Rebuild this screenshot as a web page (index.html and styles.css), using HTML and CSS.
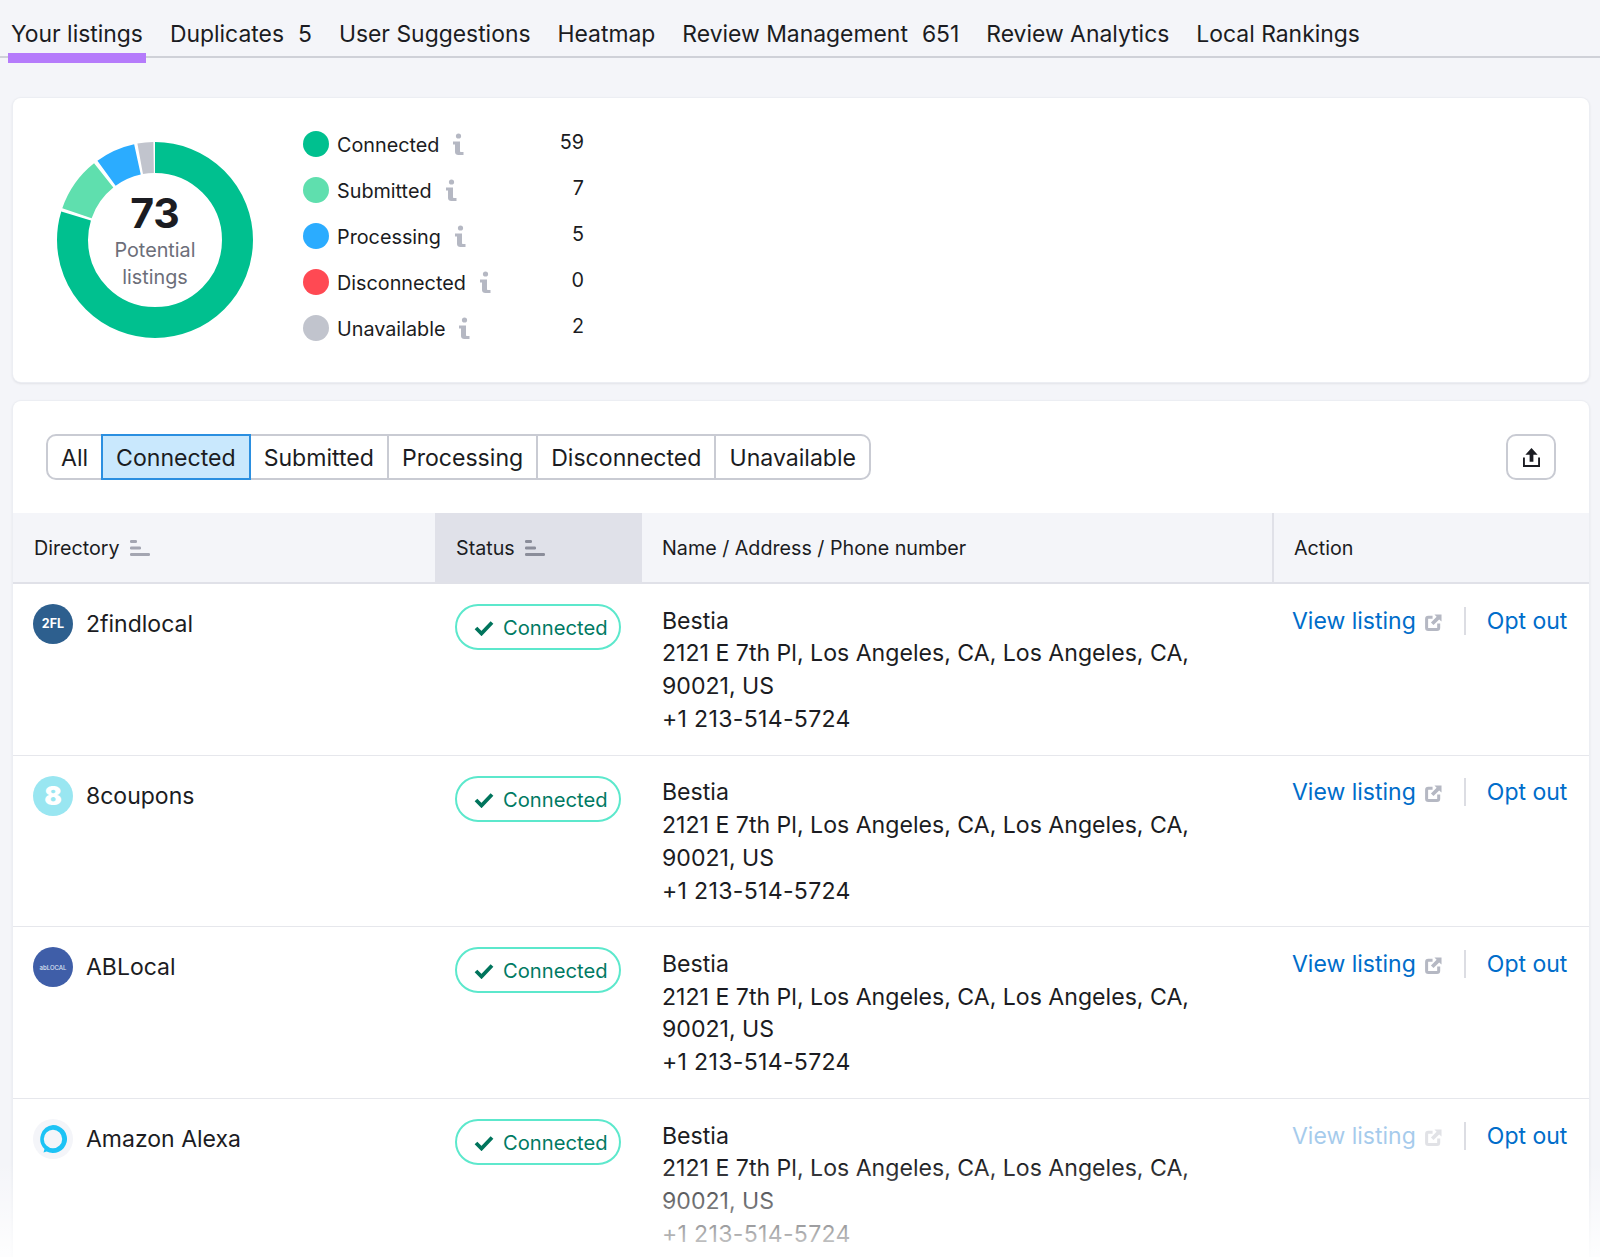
FILE: index.html
```html
<!DOCTYPE html>
<html lang="en">
<head>
<meta charset="utf-8">
<title>Your listings</title>
<link rel="stylesheet" href="styles.css">
</head>
<body>
<svg class="defs" width="0" height="0" aria-hidden="true">
  <symbol id="i-info" viewBox="0 0 12 22">
    <circle cx="6.500" cy="3" r="2.600" fill="currentColor"/>
    <path d="M1 8.500h7v9.500c0 .7.400 1 1 1h2.500V22H6.400C4.400 22 3 21 3 19V11.500H1z" fill="currentColor"/>
  </symbol>
  <symbol id="i-sort" viewBox="0 0 20 16">
    <rect x="0" y="0" width="7" height="3" rx="1.200" fill="currentColor"/>
    <rect x="0" y="6.500" width="11" height="3" rx="1.200" fill="currentColor"/>
    <rect x="0" y="13" width="20" height="3" rx="1.200" fill="currentColor"/>
  </symbol>
  <symbol id="i-check" viewBox="0 0 20 16">
    <path d="M2 8l5.500 5.500L18 2.500" fill="none" stroke="currentColor" stroke-width="3.800"/>
  </symbol>
  <symbol id="i-ext" viewBox="0 0 18 18">
    <path d="M8 3.500H3.500A1.800 1.800 0 0 0 1.700 5.300V14.500A1.800 1.800 0 0 0 3.500 16.300H12.700A1.800 1.800 0 0 0 14.500 14.500V10" fill="none" stroke="currentColor" stroke-width="3.200"/>
    <path d="M10 .5H17.500V8L15 5.700 9 11.700 6.300 9 12.300 3z" fill="currentColor"/>
  </symbol>
</svg>

<nav class="tabs">
  <a class="tab tab-active">Your listings</a>
  <a class="tab">Duplicates<span class="tab-count">5</span></a>
  <a class="tab">User Suggestions</a>
  <a class="tab">Heatmap</a>
  <a class="tab">Review Management<span class="tab-count">651</span></a>
  <a class="tab">Review Analytics</a>
  <a class="tab">Local Rankings</a>
</nav>

<main class="content">
  <section class="card summary">
    <div class="donut">
      <svg class="donut-chart" viewBox="0 0 196 196" aria-hidden="true">
        <g class="donut-ring" fill="none" stroke-width="31">
          <circle cx="98" cy="98" r="82.500" pathLength="730" stroke="#00c08f" stroke-dasharray="582 148" stroke-dashoffset="0"/>
          <circle cx="98" cy="98" r="82.500" pathLength="730" stroke="#5fdfae" stroke-dasharray="66 664" stroke-dashoffset="-586"/>
          <circle cx="98" cy="98" r="82.500" pathLength="730" stroke="#2bacff" stroke-dasharray="48 682" stroke-dashoffset="-657"/>
          <circle cx="98" cy="98" r="82.500" pathLength="730" stroke="#c1c4cd" stroke-dasharray="19 711" stroke-dashoffset="-709"/>
        </g>
      </svg>
      <div class="donut-label">
        <strong class="donut-total">73</strong>
        <span class="donut-caption">Potential<br>listings</span>
      </div>
    </div>
    <ul class="legend">
      <li class="legend-row"><span class="dot dot-connected"></span><span class="legend-name">Connected</span><svg class="info"><use href="#i-info"/></svg><span class="legend-count">59</span></li>
      <li class="legend-row"><span class="dot dot-submitted"></span><span class="legend-name">Submitted</span><svg class="info"><use href="#i-info"/></svg><span class="legend-count">7</span></li>
      <li class="legend-row"><span class="dot dot-processing"></span><span class="legend-name">Processing</span><svg class="info"><use href="#i-info"/></svg><span class="legend-count">5</span></li>
      <li class="legend-row"><span class="dot dot-disconnected"></span><span class="legend-name">Disconnected</span><svg class="info"><use href="#i-info"/></svg><span class="legend-count">0</span></li>
      <li class="legend-row"><span class="dot dot-unavailable"></span><span class="legend-name">Unavailable</span><svg class="info"><use href="#i-info"/></svg><span class="legend-count">2</span></li>
    </ul>
  </section>

  <section class="card listings">
    <div class="toolbar">
      <div class="filters">
        <button class="filter">All</button>
        <button class="filter filter-active">Connected</button>
        <button class="filter">Submitted</button>
        <button class="filter">Processing</button>
        <button class="filter">Disconnected</button>
        <button class="filter">Unavailable</button>
      </div>
      <button class="export" aria-label="Export">
        <svg class="export-icon" viewBox="0 0 18 20" aria-hidden="true">
          <path d="M9 0l6.500 7H11V14.500H7V7H2.500z" fill="currentColor"/>
          <path d="M1 10V19H17V10" fill="none" stroke="currentColor" stroke-width="2"/>
        </svg>
      </button>
    </div>

    <div class="row row-head">
      <div class="th th-first">Directory<svg class="sort"><use href="#i-sort"/></svg></div>
      <div class="th th-first th-sorted">Status<svg class="sort"><use href="#i-sort"/></svg></div>
      <div class="th">Name / Address / Phone number</div>
      <div class="th th-action">Action</div>
    </div>

    <div class="row">
      <div class="cell directory"><span class="logo logo-2fl">2FL</span>2findlocal</div>
      <div class="cell cell-status"><span class="badge"><svg class="badge-check"><use href="#i-check"/></svg>Connected</span></div>
      <div class="cell nap">Bestia<br>2121 E 7th Pl, Los Angeles, CA, Los Angeles, CA,<br>90021, US<br><span class="phone">+1 213-514-5724</span></div>
      <div class="cell actions"><a class="link">View listing</a><svg class="ext"><use href="#i-ext"/></svg><span class="sep"></span><a class="link">Opt out</a></div>
    </div>

    <div class="row">
      <div class="cell directory"><span class="logo logo-8c">8</span>8coupons</div>
      <div class="cell cell-status"><span class="badge"><svg class="badge-check"><use href="#i-check"/></svg>Connected</span></div>
      <div class="cell nap">Bestia<br>2121 E 7th Pl, Los Angeles, CA, Los Angeles, CA,<br>90021, US<br><span class="phone">+1 213-514-5724</span></div>
      <div class="cell actions"><a class="link">View listing</a><svg class="ext"><use href="#i-ext"/></svg><span class="sep"></span><a class="link">Opt out</a></div>
    </div>

    <div class="row">
      <div class="cell directory"><span class="logo logo-ab">abLOCAL</span>ABLocal</div>
      <div class="cell cell-status"><span class="badge"><svg class="badge-check"><use href="#i-check"/></svg>Connected</span></div>
      <div class="cell nap">Bestia<br>2121 E 7th Pl, Los Angeles, CA, Los Angeles, CA,<br>90021, US<br><span class="phone">+1 213-514-5724</span></div>
      <div class="cell actions"><a class="link">View listing</a><svg class="ext"><use href="#i-ext"/></svg><span class="sep"></span><a class="link">Opt out</a></div>
    </div>

    <div class="row">
      <div class="cell directory">
        <span class="logo logo-alexa">
          <svg class="alexa-icon" viewBox="0 0 28 28" aria-hidden="true">
            <path d="M14 0a14 14 0 1 1-6.400 26.450L4.500 27.500l1-3.600A14 14 0 0 1 14 0zm0 4.800a9.200 9.200 0 1 0 0 18.400 9.200 9.200 0 0 0 0-18.400z" fill="#1dc3f5" fill-rule="evenodd"/>
          </svg>
        </span>Amazon Alexa</div>
      <div class="cell cell-status"><span class="badge"><svg class="badge-check"><use href="#i-check"/></svg>Connected</span></div>
      <div class="cell nap">Bestia<br>2121 E 7th Pl, Los Angeles, CA, Los Angeles, CA,<br>90021, US<br><span class="phone">+1 213-514-5724</span></div>
      <div class="cell actions"><a class="link link-disabled">View listing</a><svg class="ext ext-disabled"><use href="#i-ext"/></svg><span class="sep"></span><a class="link">Opt out</a></div>
    </div>
  </section>
</main>
<div class="fade"></div>
</body>
</html>
```

FILE: styles.css
```css
* { box-sizing: border-box; }
html, body { margin: 0; height: 100%; }
body {
  position: relative;
  height: 1257px;
  overflow: hidden;
  background: #f4f5f9;
  color: #1b1c22;
  font-family: Inter, "Liberation Sans", sans-serif;
  font-size: 23px;
}
.defs { position: absolute; }

/* Tabs */
.tabs {
  display: flex;
  gap: 21px;
  height: 58px;
  padding-left: 8px;
  border-bottom: 2px solid #cfd1d8;
  font-size: 22.9px;
}
.tab {
  height: 63px;
  padding: 18px 3px 0;
  line-height: 32px;
  white-space: nowrap;
}
.tab-active { border-bottom: 10px solid #b57bfb; }
.tab-count { margin-left: 14px; }

/* Cards */
.content {
  display: flex;
  flex-direction: column;
  gap: 19px;
  padding: 40px 11px 0 13px;
}
.card {
  background: #fff;
  border-radius: 8px;
  box-shadow: 0 0 0 1px #eceef3, 0 1px 3px rgba(31, 32, 40, .16);
}

/* Summary */
.summary {
  display: flex;
  align-items: flex-start;
  gap: 50px;
  height: 284px;
  padding: 23px 0 0 44px;
}
.donut {
  position: relative;
  width: 196px;
  height: 196px;
  margin-top: 21px;
  flex: none;
}
.donut-chart { display: block; width: 196px; height: 196px; }
.donut-ring { transform: rotate(-90deg); transform-origin: 98px 98px; }
.donut-label {
  position: absolute;
  inset: 0;
  display: flex;
  flex-direction: column;
  align-items: center;
  padding-top: 47px;
  text-align: center;
}
.donut-total { font-size: 41px; line-height: 48px; font-weight: 700; }
.donut-caption { font-size: 19.8px; line-height: 26.5px; color: #6c6e79; }

.legend {
  width: 281px;
  margin: 0;
  padding: 0;
  list-style: none;
  font-size: 19.8px;
}
.legend-row { display: flex; align-items: center; height: 46px; }
.dot { width: 26px; height: 26px; border-radius: 50%; margin-right: 8px; flex: none; }
.dot-connected { background: #00c08f; }
.dot-submitted { background: #5fdfae; }
.dot-processing { background: #2bacff; }
.dot-disconnected { background: #ff4953; }
.dot-unavailable { background: #c1c4cd; }
.legend-name { padding-top: 1px; }
.info { width: 12px; height: 22px; margin-left: 13px; color: #b5b8c3; }
.legend-count { margin-left: auto; padding-bottom: 5px; }

/* Toolbar */
.listings { flex: 1; overflow: hidden; }
.toolbar {
  display: flex;
  justify-content: space-between;
  padding: 33px;
}
.filters { display: flex; height: 46px; }
.filter {
  height: 46px;
  margin-left: -2px;
  padding: 2px 13px 0;
  border: 2px solid #c9cbd3;
  background: #fff;
  color: inherit;
  font: inherit;
  font-size: 23.08px;
}
.filter:first-child { margin-left: 0; border-radius: 10px 0 0 10px; }
.filter:last-child { border-radius: 0 10px 10px 0; }
.filter-active {
  position: relative;
  border-color: #2b8fe0;
  background: #c9e8fd;
}
.export {
  display: flex;
  align-items: center;
  justify-content: center;
  width: 50px;
  height: 46px;
  padding: 0;
  border: 2px solid #c9cbd3;
  border-radius: 10px;
  background: #fff;
  color: #1b1c22;
}
.export-icon { width: 17px; height: 19px; }

/* Table */
.row {
  display: grid;
  grid-template-columns: 422px 207px 630px 317px;
  border-bottom: 1px solid #e6e7ec;
}
.row-head {
  height: 71px;
  border-bottom: 2px solid #e0e1e8;
  background: #f4f5f9;
  font-size: 19.7px;
}
.th { display: flex; align-items: center; padding-left: 20px; }
.th-first { padding-left: 21px; }
.th-sorted { background: #e0e1e9; }
.th-action { border-left: 2px solid #e0e1e8; }
.sort { width: 20px; height: 16px; margin-left: 10px; color: #a4a6b2; }
.th-sorted .sort { color: #8b8d9a; }

.cell { padding: 20.5px 0 19px 20px; line-height: 32.8px; }
.directory { display: flex; align-items: flex-start; gap: 13px; padding-top: 20px; line-height: 41.5px; }
.cell-status { padding-top: 20px; }
.nap { font-size: 23.1px; }
.phone { letter-spacing: .3px; }
.logo {
  display: flex;
  align-items: center;
  justify-content: center;
  width: 40px;
  height: 40px;
  border-radius: 50%;
  color: #fff;
  flex: none;
}
.logo-2fl { background: #2d5f8e; font-size: 12.5px; font-weight: 700; }
.logo-8c { background: #99e6f1; font-size: 26px; font-weight: 900; }
.logo-ab { background: #3f5ea8; font-size: 6px; font-weight: 500; color: #dfe5f3; }
.logo-alexa { background: #f4f5f9; }
.alexa-icon { display: block; width: 28px; height: 28px; }
.badge {
  display: inline-flex;
  align-items: center;
  width: 166px;
  height: 46px;
  padding: 2px 0 0 17px;
  border: 2px solid #5ce8cc;
  border-radius: 23px;
  color: #007a63;
  font-size: 20.2px;
  line-height: 1;
}
.badge-check { width: 20px; height: 16px; margin-right: 9px; color: #00745c; }
.actions { display: flex; align-items: flex-start; }
.link { color: #006dca; white-space: nowrap; }
.link-disabled { opacity: .35; }
.ext { width: 17px; height: 17px; margin: 9px 0 0 9px; color: #b5b8c3; flex: none; }
.ext-disabled { opacity: .4; }
.sep { width: 2px; height: 28px; margin: 2px 21px 0 22px; background: #dcdde3; flex: none; }

/* Bottom fade */
.fade {
  position: absolute;
  left: 0;
  right: 0;
  bottom: 0;
  height: 95px;
  background: linear-gradient(to bottom, rgba(255, 255, 255, 0), rgba(255, 255, 255, .85));
  pointer-events: none;
}
```
